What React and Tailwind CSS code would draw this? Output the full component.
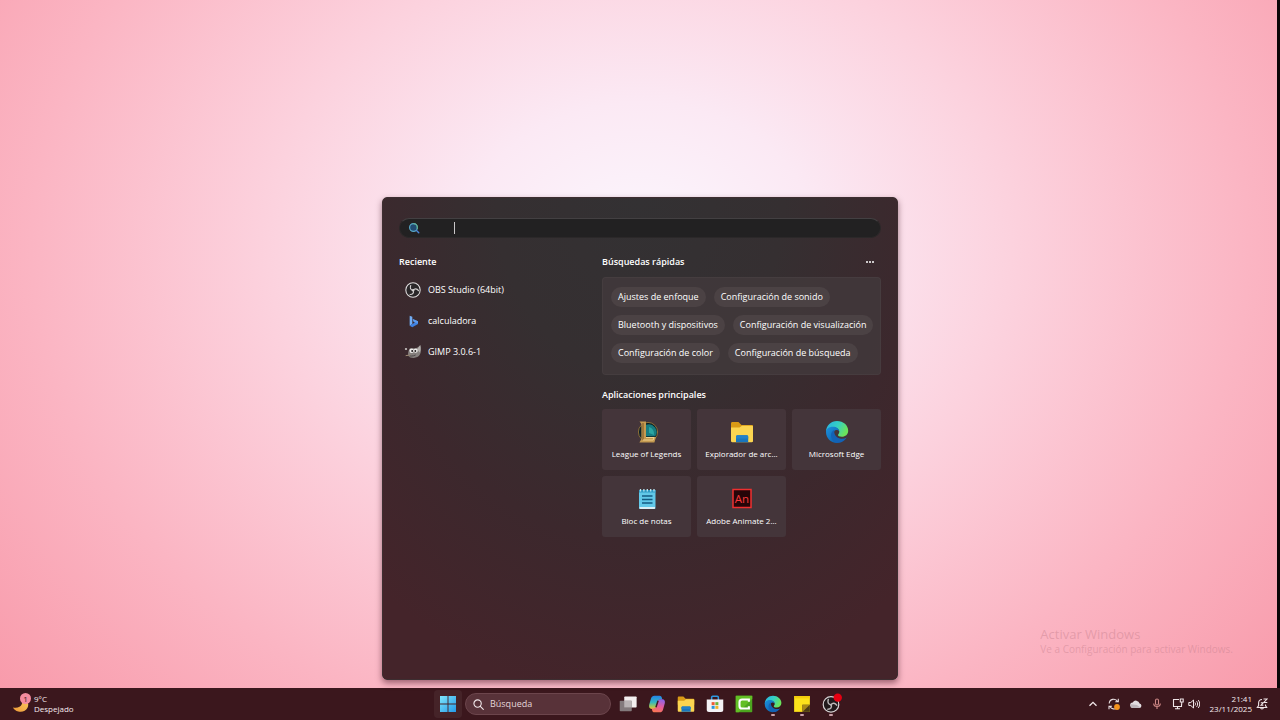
import React from "react";

const RECENT = [
  { label: "OBS Studio (64bit)", Icon: ObsIcon },
  { label: "calculadora", Icon: BingIcon },
  { label: "GIMP 3.0.6-1", Icon: GimpIcon },
];

const QUICK = [
  ["Ajustes de enfoque", "Configuración de sonido"],
  ["Bluetooth y dispositivos", "Configuración de visualización"],
  ["Configuración de color", "Configuración de búsqueda"],
];

const APPS = [
  { label: "League of Legends", Icon: LeagueIcon },
  { label: "Explorador de arc...", Icon: FolderIcon },
  { label: "Microsoft Edge", Icon: EdgeIcon },
  { label: "Bloc de notas", Icon: NotepadIcon },
  { label: "Adobe Animate 2...", Icon: AnimateIcon },
];

const PINNED = [
  { label: "Vista de tareas", Icon: TaskViewIcon },
  { label: "Copilot", Icon: CopilotIcon },
  { label: "Explorador de archivos", Icon: FolderIcon },
  { label: "Microsoft Store", Icon: StoreIcon },
  { label: "Camtasia", Icon: CamtasiaIcon },
  { label: "Microsoft Edge", Icon: EdgeIcon, running: true },
  { label: "Notas rápidas", Icon: StickyIcon, running: true },
  { label: "OBS Studio", Icon: ObsRecordingIcon, running: true },
];

function ObsIcon({ className }) {
  return (
    <svg viewBox="0 0 24 24" className={className} aria-hidden="true">
      <circle cx="12" cy="12" r="10.8" fill="#2a2729" stroke="#dedcdd" strokeWidth="1.6" />
      <g fill="none" stroke="#d3d0d1" strokeWidth="1.7" strokeLinecap="round">
        <path d="M12.2 12.6C8.4 12.4 7 9 8.6 5.2" />
        <path d="M12.2 12.6C14.3 9.4 18 9.6 20.2 13" />
        <path d="M12.2 12.6C13.8 16 11.6 18.8 7.6 18.8" />
      </g>
      <circle cx="12.2" cy="12.4" r="1.8" fill="#d3d0d1" />
    </svg>
  );
}

function ObsRecordingIcon({ className }) {
  return (
    <svg viewBox="0 0 24 24" className={className} overflow="visible" aria-hidden="true">
      <circle cx="12" cy="12.5" r="10.4" fill="#211a1c" stroke="#d8d4d5" strokeWidth="1.6" />
      <g fill="none" stroke="#bdb9ba" strokeWidth="2" strokeLinecap="round">
        <path d="M12 13C8.4 12.8 7 9.4 8.4 6" />
        <path d="M12 13C14.3 9.8 17.6 10.4 19.6 13.6" />
        <path d="M12 13C13.8 16 11.6 19 7.8 19" />
      </g>
      <circle cx="21" cy="3.5" r="5.6" fill="#e60012" />
    </svg>
  );
}

function BingIcon({ className }) {
  return (
    <svg viewBox="0 0 24 24" className={className} aria-hidden="true">
      <path d="M7 4l4 1.500v11L7 19z" fill="#72aef5" />
      <path d="M7 19l4-2.500 4-2.300-2-1.200-1.500-4 8 3.400v4.200L11 21.500z" fill="#3f82e2" />
      <path d="M11.500 9l8 3.400v3l-4.500-1.200-2-1.200z" fill="#5c9bee" />
    </svg>
  );
}

function GimpIcon({ className }) {
  return (
    <svg viewBox="0 0 24 24" className={className} overflow="visible" aria-hidden="true">
      <path
        d="M23 1.500c1.300 4.600 1.500 10.600-.6 14.400-1.700 3.200-5.400 5-9.400 5-3.800 0-7-1.200-8-3.400C4 15 5 10 6.700 7.200 9 5.500 13 7 16 6.200c2.600-.7 5.100-2.600 7-4.700z"
        fill="#85807e"
      />
      <path d="M22.800 2c.8 4 .6 8-.6 10.800L18 8z" fill="#b5b0ae" />
      <circle cx="10" cy="10" r="3.400" fill="#efedec" />
      <circle cx="16" cy="10" r="3.100" fill="#efedec" />
      <circle cx="10.800" cy="10.500" r="1.500" fill="#1f1c1d" />
      <circle cx="15.500" cy="10.500" r="1.400" fill="#1f1c1d" />
      <ellipse cx="1.500" cy="7.500" rx="1.800" ry="1.500" fill="#c4bfbd" />
      <path d="M4 17c4 1.500 8 1.600 12-.6" fill="none" stroke="#4e494a" strokeWidth="1.500" />
      <path d="M1 17.500l7-1" stroke="#9d8a74" strokeWidth="1.500" />
    </svg>
  );
}

function LeagueIcon({ className }) {
  return (
    <svg viewBox="0 0 24 24" className={className} aria-hidden="true">
      <circle cx="13" cy="12" r="9.600" fill="#0c2227" stroke="#8c6d37" strokeWidth="1" />
      <path d="M11 4.800a7.800 7.800 0 0 1 9.300 11.500H11z" fill="#177c80" />
      <path d="M14 7a7 7 0 0 1 5 8l-5-2z" fill="#2aa5a1" />
      <path d="M4.500 1.500h6.500v15.500h10l-1.600 5.500h-15l2-3.500V4z" fill="#c49a50" />
      <path d="M8 3v17" stroke="#8a6430" strokeWidth="1.300" />
      <path d="M11 17.500h8l-.8 2.500H8" fill="none" stroke="#efd08d" strokeWidth="1" />
    </svg>
  );
}

function FolderIcon({ className }) {
  return (
    <svg viewBox="0 0 24 24" className={className} aria-hidden="true">
      <path d="M1 3.500C1 2.500 1.600 2 2.500 2h6l3 3H22c.7 0 1 .5 1 1v7H1z" fill="#d99a16" />
      <path d="M1 7.500h8.500L12 5.700h10c.6 0 1 .4 1 1V21c0 .8-.4 1.200-1.200 1.200H2.200C1.400 22.200 1 21.800 1 21z" fill="#fbd551" />
      <path d="M6 22.200v-5.400c0-1 .6-1.600 1.600-1.600h9c1 0 1.600.6 1.600 1.600v5.400z" fill="#1976bd" />
      <path d="M6 18.500v-1.700c0-1 .6-1.600 1.600-1.600h9c1 0 1.600.6 1.600 1.600v1.700z" fill="#2381c8" />
    </svg>
  );
}

function EdgeIcon({ className }) {
  const id = React.useId();
  return (
    <svg viewBox="0 0 24 24" className={className} aria-hidden="true">
      <defs>
        <linearGradient id={id + "a"} x1="0" y1="0" x2="1" y2=".4">
          <stop offset="0" stopColor="#28aee6" />
          <stop offset=".55" stopColor="#35d0c3" />
          <stop offset="1" stopColor="#6be35b" />
        </linearGradient>
        <linearGradient id={id + "b"} x1="0" y1="0" x2="1" y2="1">
          <stop offset="0" stopColor="#1b90dd" />
          <stop offset="1" stopColor="#0c59a4" />
        </linearGradient>
      </defs>
      <path d="M1 11.500C1.300 5.400 6 1 12 1c6.400 0 11.200 4.400 11.200 9.800 0 3.700-2.800 6-6.300 6-2.600 0-3.900-.8-3.900-1.700 0-.7 1.300-1.400 1.300-3.300 0-2.400-2.300-4.300-5.300-4.300-4 0-6.500 2.200-8 4z" fill={"url(#" + id + "a)"} />
      <path d="M1 12c0-3 3-5.200 6.800-5.200 3.600 0 6.300 2 6.500 4.600-.8-1-2-1.500-3.200-1.400-2.400.4-3.200 3.500-2 6.200 1.300 3 4.300 4.700 7.800 4.500-1.400 1.400-3.300 2.200-5.200 2.200C5.700 22.900 1 18 1 12z" fill={"url(#" + id + "b)"} />
      <path d="M9.500 9.800C7.300 10.900 6 13 6 15.400c0 3.700 2.600 6.600 6.400 7.400 4 .2 7.500-2.200 9.300-5.300-2.400 1.400-5 1.700-7.500.8-3.600-1.300-5.700-4.800-4.700-8.500z" fill="#1362b5" />
    </svg>
  );
}

function NotepadIcon({ className }) {
  return (
    <svg viewBox="0 0 24 24" className={className} aria-hidden="true">
      <path d="M4 3h16.500v17.800c0 .8-.5 1.200-1.200 1.200H5.200c-.7 0-1.200-.4-1.200-1.200z" fill="#62c9e9" />
      <path d="M4 3h16.500v2.500H4z" fill="#2e9bc4" />
      <path d="M4.500 20h15.500v1.200c0 .5-.4.800-1 .8H5.500c-.6 0-1-.3-1-.8z" fill="#d9eef4" />
      <path d="M5.500 2v2.500M8.900 2v2.500M12.300 2v2.500M15.700 2v2.500M19 2v2.500" stroke="#b9e9f6" strokeWidth="1.300" />
      <path d="M7 9h10.500M7 12.500h10.500M7 16h10.500" stroke="#135b82" strokeWidth="1.400" />
    </svg>
  );
}

function AnimateIcon({ className }) {
  return (
    <svg viewBox="0 0 24 24" className={className} aria-hidden="true">
      <rect x="3" y="2.500" width="18" height="18" fill="#260508" stroke="#ef2f2f" strokeWidth="1.500" />
      <text x="12" y="15.700" textAnchor="middle" fontFamily="Open Sans, sans-serif" fontSize="11.500" fill="#f8393a">
        An
      </text>
    </svg>
  );
}

function TaskViewIcon({ className }) {
  return (
    <svg viewBox="0 0 24 24" className={className} aria-hidden="true">
      <rect x="7" y="2" width="16.500" height="14.500" rx="1" fill="#f3efef" />
      <rect x="1" y="7.500" width="16" height="14" rx="1" fill="#837a7c" />
      <path d="M7 7.500h10v9H7z" fill="#b9b3b4" />
    </svg>
  );
}

function CopilotIcon({ className }) {
  const id = React.useId();
  return (
    <svg viewBox="0 0 24 24" className={className} aria-hidden="true">
      <defs>
        <linearGradient id={id + "l"} x1=".4" y1="0" x2=".4" y2="1">
          <stop offset="0" stopColor="#2383e8" />
          <stop offset=".5" stopColor="#35b6c0" />
          <stop offset=".8" stopColor="#9bc75d" />
          <stop offset="1" stopColor="#efbb3d" />
        </linearGradient>
        <linearGradient id={id + "r"} x1=".6" y1="0" x2=".3" y2="1">
          <stop offset="0" stopColor="#8e64e8" />
          <stop offset=".5" stopColor="#e45b9e" />
          <stop offset="1" stopColor="#fa7650" />
        </linearGradient>
      </defs>
      <path d="M8.500 1h7c1.700 0 2.500 1 3 2.800L19 6h-3c-1.600 0-2.400 1-2.900 2.600L11 15.500C10.500 17.200 9.600 18.500 8 18.500H5C2 18.500 .9 16 1.600 13L4 4.500C4.800 2.200 6.300 1 8.500 1z" fill={"url(#" + id + "l)"} />
      <path d="M15.500 23h-7c-1.700 0-2.500-1-3-2.800L5 18h3c1.600 0 2.400-1 2.900-2.600L13 8.500C13.500 6.800 14.400 5.500 16 5.500h3c3 0 4.100 2.500 3.400 5.500L20 19.500c-.8 2.300-2.300 3.500-4.500 3.500z" fill={"url(#" + id + "r)"} />
      <path d="M13.400 7.600l-2.800 8.800" stroke="#3d1a22" strokeWidth="2" />
    </svg>
  );
}

function StoreIcon({ className }) {
  return (
    <svg viewBox="0 0 24 24" className={className} aria-hidden="true">
      <path d="M7.500 7V3.200C7.500 2.300 8 1.800 9 1.800h6c1 0 1.500.5 1.500 1.400V7" fill="none" stroke="#2e9be3" strokeWidth="2" />
      <path d="M1 6h22v13.500c0 2-1 3-3 3H4c-2 0-3-1-3-3z" fill="#f4f2f5" />
      <path d="M7.500 9.500h4v4h-4z" fill="#ef5a34" />
      <path d="M12.500 9.500h4v4h-4z" fill="#6fb43a" />
      <path d="M7.500 14.500h4v4h-4z" fill="#2b95dc" />
      <path d="M12.500 14.500h4v4h-4z" fill="#f3b32b" />
    </svg>
  );
}

function CamtasiaIcon({ className }) {
  return (
    <svg viewBox="0 0 24 24" className={className} aria-hidden="true">
      <rect x="1" y="1" width="22" height="22" rx="1" fill="#4ca51f" />
      <path d="M1 1h22v4L5 23H1z" fill="#62bf25" />
      <path d="M18.500 9V6H9.500C7.300 6 6 7.300 6 9.500v5C6 16.700 7.300 18 9.500 18h9v-3" fill="none" stroke="#fff" strokeWidth="2.800" />
    </svg>
  );
}

function StickyIcon({ className }) {
  return (
    <svg viewBox="0 0 24 24" className={className} aria-hidden="true">
      <path d="M1.500 1.500h21v21h-21z" fill="#fce21b" />
      <path d="M1.500 1.500h21v3h-21z" fill="#f3cd0c" />
      <path d="M12.500 13h10v9.500h-10z" fill="#4a3b16" />
      <path d="M12.500 13h10l-10 9.500z" fill="#a98a17" />
    </svg>
  );
}

function BingSearchIcon({ className }) {
  return (
    <svg viewBox="0 0 24 24" className={className} aria-hidden="true">
      <circle cx="11" cy="11" r="7.800" fill="#214b72" stroke="#58a8c7" strokeWidth="2.400" />
      <path d="M11 3.200a7.800 7.800 0 0 1 7.300 10.500" fill="none" stroke="#5fae8c" strokeWidth="2.400" />
      <path d="M17 17l4.500 4.500" stroke="#4a86d8" strokeWidth="2.800" strokeLinecap="round" />
    </svg>
  );
}

function MagnifierIcon({ className }) {
  return (
    <svg viewBox="0 0 24 24" className={className} fill="none" stroke="#f1e8ea" strokeWidth="2.400" strokeLinecap="round" aria-hidden="true">
      <circle cx="10" cy="10" r="8" />
      <path d="M16 16l6.500 6.500" />
    </svg>
  );
}

function StartIcon({ className }) {
  const id = React.useId();
  return (
    <svg viewBox="0 0 24 24" className={className} aria-hidden="true">
      <defs>
        <linearGradient id={id} x1="0" y1="0" x2="24" y2="24" gradientUnits="userSpaceOnUse">
          <stop offset="0" stopColor="#7fe6fb" />
          <stop offset="1" stopColor="#2499e8" />
        </linearGradient>
      </defs>
      <path d="M0 0h11.300v11.300H0zM12.700 0H24v11.300H12.700zM0 12.700h11.300V24H0zM12.700 12.700H24V24H12.700z" fill={"url(#" + id + ")"} />
    </svg>
  );
}

function MoonIcon({ className }) {
  const id = React.useId();
  return (
    <svg viewBox="0 0 24 24" className={className} overflow="visible" aria-hidden="true">
      <defs>
        <linearGradient id={id} x1="0" y1="1" x2="1" y2="0">
          <stop offset="0" stopColor="#ef9a36" />
          <stop offset="1" stopColor="#f8cb62" />
        </linearGradient>
      </defs>
      <path d="M13 3.500c7.500 1.500 10.500 8 7.700 13.500-2.300 4.500-7.500 6.500-12.300 5C5 21.200 2.800 19.300 1.300 16.500c6 1.200 10.200-.6 11.700-4.300 1.200-2.800.8-5.700 0-8.700z" fill={"url(#" + id + ")"} />
    </svg>
  );
}

function ChevronUpIcon() {
  return (
    <svg viewBox="0 0 12 12" className="size-3" fill="none" stroke="#f3e9eb" strokeWidth="1.300" aria-hidden="true">
      <path d="M2.500 7.800L6 4.300l3.500 3.500" />
    </svg>
  );
}

function UpdateIcon() {
  return (
    <svg viewBox="0 0 12 12" className="size-3" fill="none" aria-hidden="true">
      <g stroke="#e9dfe1" strokeWidth="1.100">
        <path d="M1.200 5.500A4.500 4.500 0 0 1 9.600 3.500M10.300.8v3H7.300" />
        <path d="M9 9.800a4.500 4.500 0 0 1-7-1.300M1 11.300v-3h3" />
      </g>
      <circle cx="9" cy="9" r="2.900" fill="#f5931e" />
    </svg>
  );
}

function CloudIcon() {
  return (
    <svg viewBox="0 0 12 12" className="size-3" aria-hidden="true">
      <path d="M3 10a2.700 2.700 0 0 1-.3-5.400 3.700 3.700 0 0 1 6.900.9A2.300 2.300 0 0 1 9.600 10z" fill="#e2dde0" />
      <path d="M3 10a2.700 2.700 0 0 1-1.900-3.800L7 7l3.700 2.700z" fill="#bdb6bb" />
    </svg>
  );
}

function MicIcon() {
  return (
    <svg viewBox="0 0 12 12" className="size-3" fill="none" stroke="#cf8886" strokeWidth="1.100" aria-hidden="true">
      <rect x="4.500" y="1" width="3" height="6" rx="1.500" />
      <path d="M2.700 5.500c0 4 6.600 4 6.600 0M6 8.700V11" />
    </svg>
  );
}

function NetworkIcon() {
  return (
    <svg viewBox="0 0 12 12" className="size-3" fill="none" stroke="#efe5e7" strokeWidth="1.100" aria-hidden="true">
      <path d="M7 1.500H1.500v7h8V6M5.500 8.500v2M3 10.800h5" />
      <path d="M8.300 1h2.900v3H8.300zM9.700 4v2.500" />
    </svg>
  );
}

function SpeakerIcon() {
  return (
    <svg viewBox="0 0 12 12" className="size-3" fill="none" stroke="#efe5e7" strokeWidth="1" aria-hidden="true">
      <path d="M.8 4.500h2L5.500 2v8L2.800 7.500h-2z" />
      <path d="M7 4.500c.7.900.7 2.100 0 3M8.600 3.200c1.400 1.700 1.400 3.900 0 5.600M10.200 2c2 2.400 2 5.600 0 8" />
    </svg>
  );
}

function BellIcon() {
  return (
    <svg viewBox="0 0 12 12" className="size-3" fill="none" stroke="#efe5e7" strokeWidth="1.100" aria-hidden="true">
      <path d="M6 1.500C3.600 1.500 2.600 3.200 2.600 5v2.500L1.300 9.500h9.400L9.500 7.500V6.500M4.600 9.800c.2 1.600 2.600 1.600 2.800 0" />
      <path d="M7.500 1h3.500L7.800 4.500h3.500M4.800 4.800h2.400L5 7.300h2.400" />
    </svg>
  );
}

function SearchPanel() {
  return (
    <main className="flex min-h-[483px] w-full max-w-[516px] flex-col rounded-[5px] border border-[#3d2e31] bg-[radial-gradient(ellipse_80%_105%_at_50%_0%,#333133_0%,#352f31_35%,#3c282d_68%,#44242a_100%)] px-4 pt-5 shadow-[0_3px_6px_rgba(60,10,25,0.5)]">
      <div className="flex h-5 items-center rounded-full border border-[#2b2829] border-t-[#434042] bg-[#222122] px-2">
        <BingSearchIcon className="size-3 shrink-0" />
        <span className="ml-[34px] h-3 w-px bg-[#c9c7c8]" />
        <input type="text" aria-label="Buscar" className="h-full min-w-0 flex-1 bg-transparent pl-1 text-[9px] caret-transparent outline-none" />
      </div>

      <div className="mt-4 grid grid-cols-[1fr_279px] gap-6">
        <section>
          <h2 className="text-[9px] leading-4 font-semibold">Reciente</h2>
          <ul className="mt-1">
            {RECENT.map(({ label, Icon }) => (
              <li key={label}>
                <button type="button" className="flex h-[31px] w-full items-center gap-[7px] pl-[6px] text-left text-[9px] leading-4">
                  <Icon className="size-4 shrink-0" />
                  {label}
                </button>
              </li>
            ))}
          </ul>
        </section>

        <div>
          <section>
            <div className="flex items-center justify-between">
              <h2 className="text-[9px] leading-4 font-semibold">Búsquedas rápidas</h2>
              <button type="button" aria-label="Más opciones" className="mr-[7px] flex h-4 items-center gap-px">
                <span className="size-[2px] rounded-full bg-white" />
                <span className="size-[2px] rounded-full bg-white" />
                <span className="size-[2px] rounded-full bg-white" />
              </button>
            </div>
            <div className="mt-[7px] flex flex-col gap-2 rounded border border-white/3 bg-[#423a3c]/80 px-2 pt-[9px] pb-[11px]">
              {QUICK.map((row) => (
                <div key={row[0]} className="flex gap-2">
                  {row.map((label) => (
                    <button key={label} type="button" className="h-5 rounded-full bg-[#4b4244] px-[7px] text-[9px] leading-4 whitespace-nowrap">
                      {label}
                    </button>
                  ))}
                </div>
              ))}
            </div>
          </section>

          <section className="mt-3">
            <h2 className="text-[9px] leading-4 font-semibold">Aplicaciones principales</h2>
            <div className="mt-[6px] grid grid-cols-3 gap-[6px]">
              {APPS.map(({ label, Icon }) => (
                <button key={label} type="button" className="flex h-[61px] flex-col items-center rounded-[3px] bg-[#44353a] pt-[11px] text-[8px] leading-4 whitespace-nowrap">
                  <Icon className="mb-[2px] size-6" />
                  {label}
                </button>
              ))}
            </div>
          </section>
        </div>
      </div>
    </main>
  );
}

function Taskbar() {
  return (
    <footer className="grid h-8 grid-cols-[1fr_auto_1fr] items-center bg-[#3b171d] text-[#f6ecee]">
      <button type="button" className="flex items-center gap-1 justify-self-start pl-3 text-left">
        <span className="relative">
          <MoonIcon className="size-[18px]" />
          <span className="absolute -top-[2px] left-[8px] flex size-[11px] items-center justify-center rounded-full bg-[#f58b9e] text-[8px] leading-none text-[#3b171d]">1</span>
        </span>
        <span className="text-[8px] leading-[10px]">
          <span className="block">9°C</span>
          <span className="block">Despejado</span>
        </span>
      </button>

      <div className="flex items-center pr-[6px]">
        <button type="button" aria-label="Inicio" className="mr-[3px] flex size-7 items-center justify-center rounded bg-white/5">
          <StartIcon className="size-4" />
        </button>
        <label className="mr-2 flex h-[22px] w-[146px] items-center gap-[6px] rounded-full border border-[#6c454c] bg-[#583239] px-[7px]">
          <MagnifierIcon className="size-[11px] shrink-0" />
          <input type="text" placeholder="Búsqueda" aria-label="Búsqueda" className="w-full min-w-0 bg-transparent text-[9px] outline-none placeholder:text-[#e5d6d9]" />
        </label>
        <div className="flex gap-[11px]">
          {PINNED.map(({ label, Icon, running }) => (
            <button key={label} type="button" aria-label={label} className="relative">
              <Icon className="size-[18px]" />
              {running && <span className="absolute -bottom-[3px] left-[7px] h-[2px] w-1 rounded-full bg-[#c9a0a8]" />}
            </button>
          ))}
        </div>
      </div>

      <div className="flex items-center justify-self-end pr-3">
        <button type="button" aria-label="Mostrar iconos ocultos" className="mr-[9px]"><ChevronUpIcon /></button>
        <button type="button" aria-label="Actualización" className="mr-[10px]"><UpdateIcon /></button>
        <button type="button" aria-label="OneDrive" className="mr-[9px]"><CloudIcon /></button>
        <button type="button" aria-label="Micrófono" className="mr-[9px]"><MicIcon /></button>
        <button type="button" aria-label="Red y volumen" className="mr-[10px] flex gap-1"><NetworkIcon /><SpeakerIcon /></button>
        <button type="button" className="mr-1 text-right text-[8px] leading-[10px]">
          <span className="block">21:41</span>
          <span className="block">23/11/2025</span>
        </button>
        <button type="button" aria-label="Notificaciones"><BellIcon /></button>
      </div>
    </footer>
  );
}

export default function App() {
  return (
    <div className="flex min-h-screen flex-col font-['Open_Sans','Noto_Sans',sans-serif] text-white">
      <div className="relative flex flex-1 flex-col items-center justify-end bg-[radial-gradient(ellipse_58%_88%_at_50%_36%,#fbf7fe_0%,#fbe9f4_24%,#fcd2de_50%,#fbb5c3_82%,#f899a9_115%)] pb-2">
        <SearchPanel />
        <div className="absolute right-[47px] bottom-[33px] text-[#c67f8d]/45">
          <p className="text-[13px] leading-[18px]">Activar Windows</p>
          <p className="text-[10px] leading-3">Ve a Configuración para activar Windows.</p>
        </div>
        <div className="absolute inset-y-0 right-0 w-[3px] bg-[#0b0507]" />
      </div>
      <Taskbar />
    </div>
  );
}
